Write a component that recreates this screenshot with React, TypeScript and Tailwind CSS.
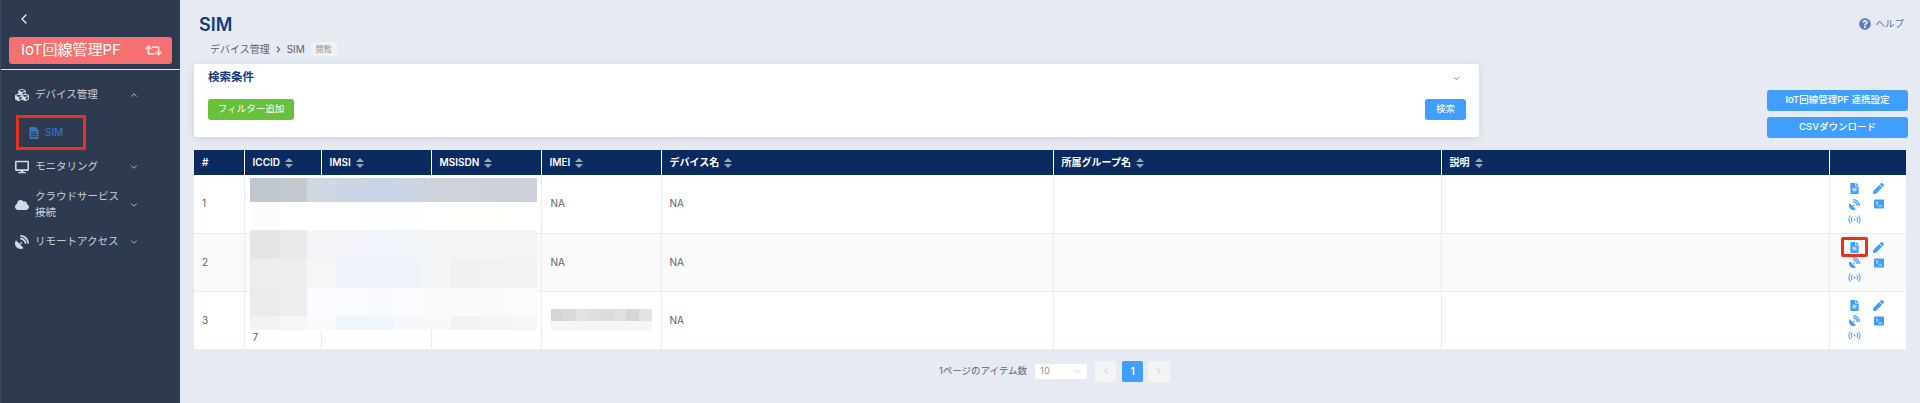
import { FaCloud, FaCubes, FaDesktop, FaPen, FaQuestionCircle, FaSatelliteDish, FaSimCard, FaFileAlt, FaRetweet, FaChevronLeft } from 'react-icons/fa'
import { LuChevronDown, LuChevronUp, LuChevronLeft, LuChevronRight } from 'react-icons/lu'

const font = 'font-["Inter","Noto_Sans_CJK_JP",sans-serif]'

const mosaic = [
  ['bg-[#c0c6ce]', 'bg-[#c3c7ce]', 'bg-[#d0d6e2]', 'bg-[#ccd5e3]', 'bg-[#c9d4e4]', 'bg-[#cbd5e4]', 'bg-[#cdd2dc]', 'bg-[#ced2db]', 'bg-[#cdd1dc]', 'bg-[#cdd1dc]'],
  ['bg-[#fefcfa]', 'bg-[#ffffff]', 'bg-[#ffffff]', 'bg-[#feffff]', 'bg-[#fdffff]', 'bg-[#fdfeff]', 'bg-[#fffffe]', 'bg-[#fffffc]', 'bg-[#fffffc]', 'bg-[#ffffff]'],
  ['bg-[#e4e5e7]', 'bg-[#e8e9ea]', 'bg-[#f4f5f8]', 'bg-[#f2f4f9]', 'bg-[#f1f4fa]', 'bg-[#f2f5f9]', 'bg-[#f4f5f6]', 'bg-[#f3f5f4]', 'bg-[#f4f5f5]', 'bg-[#f4f4f4]'],
  ['bg-[#eceeec]', 'bg-[#eef0ee]', 'bg-[#f5f6f8]', 'bg-[#eef2fa]', 'bg-[#eef2fa]', 'bg-[#f0f3f9]', 'bg-[#f4f5f6]', 'bg-[#f1f1f0]', 'bg-[#f2f2f2]', 'bg-[#f3f3f3]'],
  ['bg-[#ebebeb]', 'bg-[#eeeeee]', 'bg-[#fafbfe]', 'bg-[#f9fbfe]', 'bg-[#f8fafe]', 'bg-[#fafbfe]', 'bg-[#fafafa]', 'bg-[#fafafa]', 'bg-[#fafafa]', 'bg-[#fbfbfb]'],
  ['bg-[#f1f3f1]', 'bg-[#f6f6f5]', 'bg-[#f8fbfe]', 'bg-[#eef5fd]', 'bg-[#eef5fd]', 'bg-[#f5f8fc]', 'bg-[#f8f8f8]', 'bg-[#f2f2f2]', 'bg-[#f4f4f4]', 'bg-[#f6f6f6]'],
]

const imeiBlur = ['bg-[#d4d5d6]', 'bg-[#d8d9da]', 'bg-[#e2e2e2]', 'bg-[#dedede]', 'bg-[#dcdcdc]', 'bg-[#e0e0e0]', 'bg-[#d6d6d6]', 'bg-[#e2e2e2]']

function Sort() {
  return (
    <span className="inline-flex flex-col gap-[2px] ml-[5px] align-middle">
      <span className="w-0 h-0 border-x-[4px] border-x-transparent border-b-[4px] border-b-[#9aa3b5]" />
      <span className="w-0 h-0 border-x-[4px] border-x-transparent border-t-[4px] border-t-[#9aa3b5]" />
    </span>
  )
}

function Terminal() {
  return (
    <svg viewBox="0 0 12 12" className="w-[10px] h-[10px]">
      <rect width="12" height="11" y="0.5" rx="1" fill="#409eff" />
      <path d="M2.5 3l2.5 2-2.5 2M5.5 8.5h4" stroke="#fff" strokeWidth="1" fill="none" />
    </svg>
  )
}

function Broadcast() {
  return (
    <svg viewBox="0 0 14 12" className="w-[13px] h-[11px]" fill="none" stroke="#409eff" strokeWidth="1.1">
      <circle cx="7" cy="6" r="1" fill="#409eff" stroke="none" />
      <path d="M4.6 3.4a4 4 0 0 0 0 5.2M9.4 3.4a4 4 0 0 1 0 5.2M2.6 1.6a7 7 0 0 0 0 8.8M11.4 1.6a7 7 0 0 1 0 8.8" />
    </svg>
  )
}

function Actions({ marked }: { marked?: boolean }) {
  return (
    <div className="pl-[11px] grid grid-cols-[27px_22px] items-center justify-start gap-y-[4px] text-[#409eff]">
      <div className="relative flex justify-center h-[12px] items-center">
        <FaFileAlt className="w-[9px] h-[11px]" />
        {marked && <span className="absolute left-0 -top-[4px] w-[27px] h-[20px] border-[3px] border-[#e8301a] rounded-[2px]" />}
      </div>
      <div className="flex justify-center"><FaPen className="w-[11px] h-[11px]" /></div>
      <div className="flex justify-center"><FaSatelliteDish className="w-[11px] h-[11px]" /></div>
      <div className="flex justify-center"><Terminal /></div>
      <div className="flex justify-center"><Broadcast /></div>
    </div>
  )
}

function MenuItem({ icon, label, open }: { icon: React.ReactNode; label: string; open?: boolean }) {
  return (
    <div className="flex items-center h-[20px] pl-[14px] pr-[41px] text-[#c9d0dc] text-[10.5px]">
      <span className="w-[20px] flex text-[#d5dbe5] text-[14px]">{icon}</span>
      <span className="flex-1">{label}</span>
      {open ? <LuChevronUp className="w-[10px] h-[10px]" /> : <LuChevronDown className="w-[10px] h-[10px]" />}
    </div>
  )
}

const headers = ['#', 'ICCID', 'IMSI', 'MSISDN', 'IMEI', 'デバイス名', '所属グループ名', '説明', '']

const rows = [
  { n: 1, imei: 'NA', marked: false },
  { n: 2, imei: 'NA', marked: true },
  { n: 3, imei: '', marked: false },
]

export default function App() {
  return (
    <div className={`flex h-screen w-full overflow-hidden bg-[#e6eaf3] ${font}`}>
      <aside className="w-[180px] shrink-0 bg-[#2d3a4f] border-l border-[#3d4a5f] flex flex-col">
        <div className="h-[37px] pl-[15px] flex items-center">
          <LuChevronLeft className="w-[16px] h-[16px] text-[#e8ecf2]" />
        </div>
        <div className="mx-[8px] h-[27px] rounded-[3px] bg-[#f77070] flex items-center pl-[12px] pr-[10px] text-white text-[15px] justify-between">
          <span>IoT回線管理PF</span>
          <FaRetweet className="w-[17px] h-[17px] text-[#fbdada]" />
        </div>
        <div className="mt-[5px] h-px bg-[#dfe3ea]" />
        <div className="mt-[15px]"><MenuItem icon={<FaCubes />} label="デバイス管理" open /></div>
        <div className="mt-[10px] ml-[15px] w-[70px] h-[35px] border-[3px] border-[#e8301a] flex items-center pl-[10px] gap-[6px] text-[#3a7bc8] text-[10px]">
          <FaSimCard className="w-[10px] h-[12px]" />
          <span>SIM</span>
        </div>
        <div className="mt-[7px]"><MenuItem icon={<FaDesktop />} label="モニタリング" /></div>
        <div className="mt-[18px]"><MenuItem icon={<FaCloud />} label="クラウドサービス接続" /></div>
        <div className="mt-[17px]"><MenuItem icon={<FaSatelliteDish />} label="リモートアクセス" /></div>
      </aside>

      <main className="flex-1 min-w-0 pl-[14px] pr-[13px]">
        <div className="flex justify-between pt-[13px] h-[43px]">
          <h1 className="pl-[5px] text-[#133a7c] text-[18px] font-semibold leading-[23px]">SIM</h1>
          <div className="flex items-center h-[22px] gap-[4px] pr-[3px] text-[#5f7196] text-[9.5px]">
            <FaQuestionCircle className="w-[12px] h-[12px] text-[#5f7eb5]" />
            <span>ヘルプ</span>
          </div>
        </div>
        <div className="flex items-center h-[14px] pl-[16px] text-[#606266] text-[10px] gap-[5px] -mt-[1px]">
          <span>デバイス管理</span>
          <FaChevronLeft className="w-[7px] h-[7px] rotate-180" />
          <span>SIM</span>
          <span className="ml-[1px] px-[5px] h-[14px] leading-[14px] bg-[#f0f1f4] text-[#909399] text-[8px] rounded-[1px]">閲覧</span>
        </div>

        <div className="mt-[8px] flex justify-between items-start">
          <section className="w-[1285px] h-[73px] bg-white rounded-[2px] shadow-[0_2px_8px_rgba(0,0,0,0.1)] pl-[14px] pr-[13px] pt-[6px]">
            <div className="flex justify-between items-center h-[16px]">
              <span className="text-[#133a7c] text-[11.5px] font-semibold">検索条件</span>
              <LuChevronDown className="w-[9px] h-[9px] text-[#606266] mr-[5px]" />
            </div>
            <div className="mt-[13px] flex justify-between">
              <button className="w-[86px] h-[21px] rounded-[3px] bg-[#67c23a] text-white text-[9.5px]">フィルター追加</button>
              <button className="w-[41px] h-[21px] rounded-[3px] bg-[#409eff] text-white text-[9.5px]">検索</button>
            </div>
          </section>
          <div className="mt-[26px] -mr-[1px] w-[141px] flex flex-col gap-[6px]">
            <button className="h-[21px] rounded-[3px] bg-[#409eff] text-white text-[9.5px] font-medium">IoT回線管理PF 連携設定</button>
            <button className="h-[21px] rounded-[3px] bg-[#409eff] text-white text-[9.5px] font-medium">CSVダウンロード</button>
          </div>
        </div>

        <div className="relative mt-[12px] w-[1712px]">
          <table className="w-full table-fixed border-collapse text-[10px] text-[#606266]">
            <colgroup>
              <col className="w-[50px]" />
              <col className="w-[77px]" />
              <col className="w-[110px]" />
              <col className="w-[110px]" />
              <col className="w-[120px]" />
              <col className="w-[392px]" />
              <col className="w-[388px]" />
              <col className="w-[388px]" />
              <col className="w-[77px]" />
            </colgroup>
            <thead>
              <tr className="h-[25px] bg-[#0a2a60] text-white text-left">
                {headers.map((h, i) => (
                  <th key={i} className={`font-semibold text-[10px] pl-[8px] border-white ${i < 8 ? 'border-r' : ''}`}>
                    {h}
                    {i > 0 && i < 8 && <Sort />}
                  </th>
                ))}
              </tr>
            </thead>
            <tbody>
              {rows.map(r => (
                <tr key={r.n} className={`h-[58px] border-b border-[#e8ebf3] ${r.n === 2 ? 'bg-[#fafafa]' : 'bg-white'}`}>
                  <td className="pl-[8px] border-r border-[#e8ebf3]">{r.n}</td>
                  <td className="relative border-r border-[#e8ebf3]">
                    {r.n === 3 && <span className="absolute left-[8px] bottom-[7px] leading-none">7</span>}
                  </td>
                  <td className="border-r border-[#e8ebf3]" />
                  <td className="border-r border-[#e8ebf3]" />
                  <td className="pl-[9px] border-r border-[#e8ebf3]">
                    {r.imei || (
                      <div className="w-[101px]">
                        <div className="grid grid-cols-8 h-[12px]">
                          {imeiBlur.map((c, i) => <div key={i} className={c} />)}
                        </div>
                        <div className="h-[10px] bg-[#f6f6f6]" />
                      </div>
                    )}
                  </td>
                  <td className="pl-[8px] border-r border-[#e8ebf3]">NA</td>
                  <td className="border-r border-[#e8ebf3]" />
                  <td className="border-r border-[#e8ebf3]" />
                  <td><Actions marked={r.marked} /></td>
                </tr>
              ))}
            </tbody>
          </table>
          <div className="absolute left-[56px] top-[28px] w-[287px] h-[152px] grid grid-cols-10 grid-rows-[24px_28px_29px_29px_28px_14px] pointer-events-none">
            {mosaic.flat().map((c, i) => <div key={i} className={c} />)}
          </div>
        </div>

        <div className="mt-[11px] flex items-center justify-center gap-[8px] text-[#606266] text-[9.5px] pl-[8px]">
          <span className="mr-[0px]">1ページのアイテム数</span>
          <div className="w-[52px] h-[15px] bg-white rounded-[2px] flex items-center justify-between px-[5px] text-[#909399]">
            <span>10</span>
            <LuChevronDown className="w-[9px] h-[9px] text-[#c0c4cc]" />
          </div>
          <div className="w-[21px] h-[21px] bg-[#f4f4f5] rounded-[2px] flex items-center justify-center text-[#c0c4cc]"><LuChevronLeft className="w-[10px] h-[10px]" /></div>
          <div className="-ml-[2px] w-[21px] h-[21px] bg-[#409eff] rounded-[2px] flex items-center justify-center text-white font-semibold text-[10px]">1</div>
          <div className="-ml-[3px] w-[22px] h-[21px] bg-[#f4f4f5] rounded-[2px] flex items-center justify-center text-[#c0c4cc]"><LuChevronRight className="w-[10px] h-[10px]" /></div>
        </div>
      </main>
    </div>
  )
}
